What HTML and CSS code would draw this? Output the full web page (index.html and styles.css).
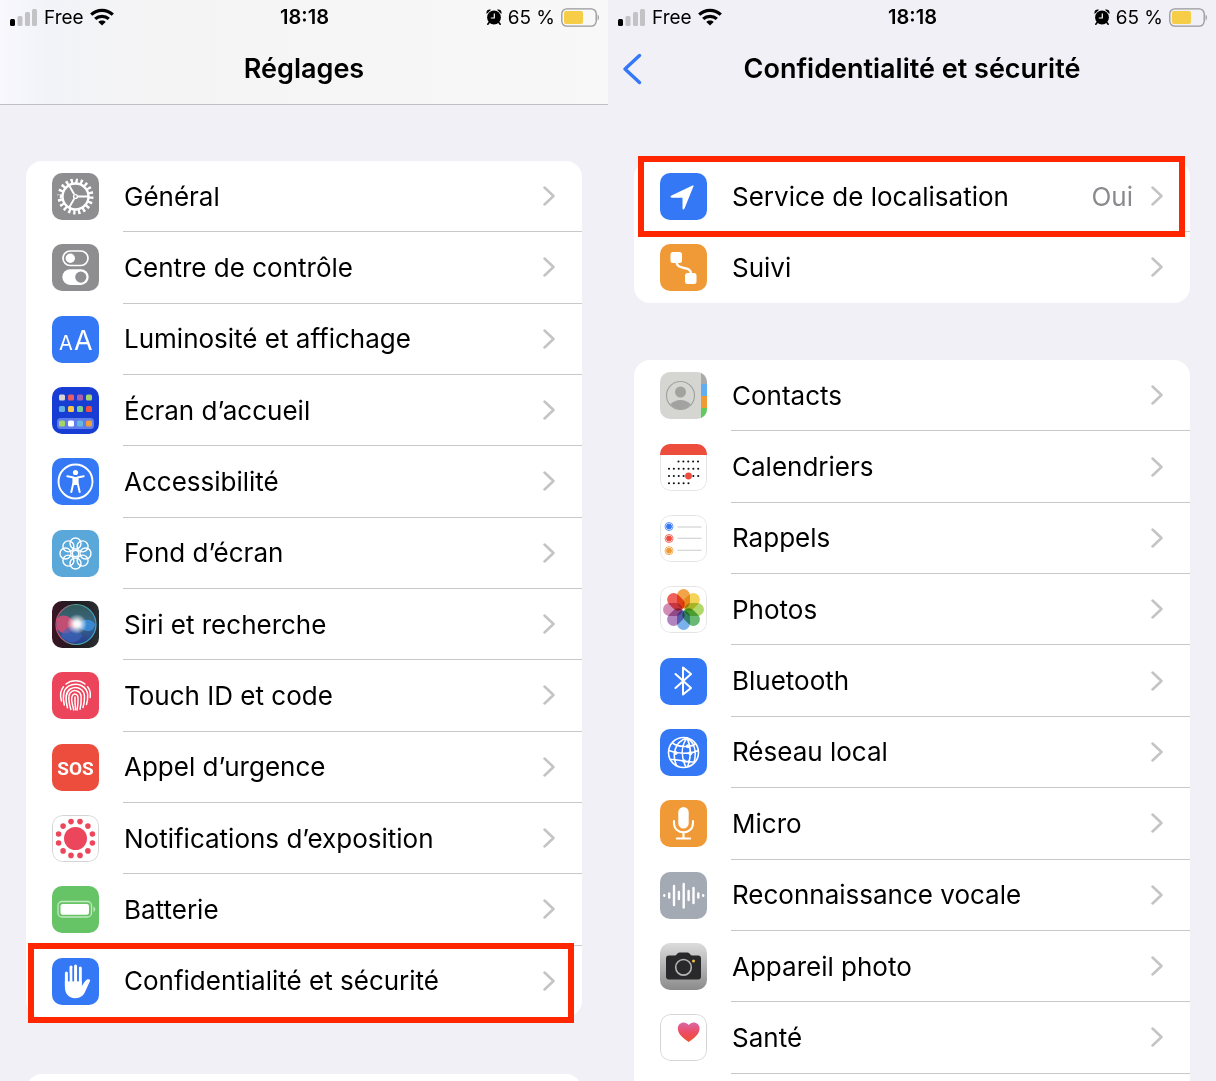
FILE: index.html
```html
<!DOCTYPE html>
<html lang="fr">
<head>
<meta charset="utf-8">
<meta name="viewport" content="width=device-width, initial-scale=1">
<title>Réglages – Confidentialité et sécurité</title>
<link rel="stylesheet" href="styles.css">
</head>
<body>
<svg class="symbols" aria-hidden="true">
  <symbol id="signal" viewBox="0 0 28 18">
    <rect x="0" y="11" width="5" height="7" rx="1.5" fill="#000"/>
    <g fill="#c3c3c5"><rect x="7.500" y="8" width="5" height="10" rx="1.500"/><rect x="15" y="4" width="5" height="14" rx="1.500"/><rect x="22" y="1" width="5" height="17" rx="1.500"/></g>
  </symbol>
  <symbol id="wifi" viewBox="0 0 24 18">
    <g fill="none" stroke="#000" stroke-width="3.200"><path d="M1.200 6.700C7.300.8 16.700.8 22.800 6.700"/><path d="M5.200 10.900C9 7.400 15 7.400 18.800 10.900"/></g>
    <path d="M12 17.600L8.300 13.900C10.300 12 13.700 12 15.700 13.900Z"/>
  </symbol>
  <symbol id="alarm" viewBox="0 0 16 16">
    <circle cx="8" cy="8.500" r="6.900"/>
    <path d="M.6 5C-.2 2 2 0 5 .8ZM15.400 5C16.200 2 14 0 11 .8Z"/>
    <path d="M3.500 13L1.800 15.200M12.500 13l1.700 2.200" stroke="#000" stroke-width="1.600" stroke-linecap="round"/>
    <path d="M8.300 4.500V9H4.800" fill="none" stroke="#fff" stroke-width="1.200"/>
  </symbol>
  <symbol id="battery" viewBox="0 0 38 19">
    <rect x=".8" y=".8" width="34.400" height="17.400" rx="5" fill="none" stroke="#98989b" stroke-width="1.300"/>
    <rect x="3" y="3" width="19" height="13" rx="2" fill="#f6cd46"/>
    <path d="M36.600 6.500c1.700.8 1.700 5.200 0 6z" fill="#98989b"/>
  </symbol>
  <symbol id="chevron" viewBox="0 0 12 20">
    <path d="M1.500 1.500L10.500 10L1.500 18.500" fill="none" stroke="#c4c4c6" stroke-width="2.500" stroke-linecap="round" stroke-linejoin="round"/>
  </symbol>
</svg>

<main class="screens">
  <section class="screen">
    <header class="header header-scrolled">
      <div class="status">
        <div class="status-side"><svg class="signal"><use href="#signal"/></svg><span>Free</span><svg class="wifi"><use href="#wifi"/></svg></div>
        <time class="clock">18:18</time>
        <div class="status-side status-end"><svg class="alarm"><use href="#alarm"/></svg><span>65 %</span><svg class="battery"><use href="#battery"/></svg></div>
      </div>
      <div class="titlebar"><h1 class="title">Réglages</h1></div>
    </header>

    <nav class="card card-settings">
      <a class="row" href="#">
        <svg class="icon gray" viewBox="0 0 47 47">
          <g fill="none" stroke="#fff"><circle cx="23.500" cy="23.500" r="15.700" stroke-width="4.600" pathLength="40" stroke-dasharray=".95 1.050"/><circle cx="23.500" cy="23.500" r="13" stroke-width="2.400"/><path d="M26 23.500H36M22.200 21.300L17 12.300M22.200 25.700L17 34.700" stroke-width="1.900"/><circle cx="23.500" cy="23.500" r="1.900" stroke-width="1.400"/></g>
        </svg>
        <span class="cell"><span class="label">Général</span><svg class="chevron"><use href="#chevron"/></svg></span>
      </a>
      <a class="row" href="#">
        <svg class="icon gray" viewBox="0 0 47 47">
          <rect x="11" y="7" width="25" height="14.500" rx="7.200" fill="none" stroke="#fff" stroke-width="1.700"/><circle cx="18.300" cy="14.200" r="4.700" fill="#fff"/>
          <rect x="10.300" y="25.300" width="26.400" height="15.600" rx="7.800" fill="#fff"/><circle cx="28.800" cy="33.100" r="5.600" fill="#8e8e93"/>
        </svg>
        <span class="cell"><span class="label">Centre de contrôle</span><svg class="chevron"><use href="#chevron"/></svg></span>
      </a>
      <a class="row" href="#">
        <svg class="icon blue" viewBox="0 0 47 47"><text class="glyph" x="7" y="34" font-size="20">A</text><text class="glyph" x="22" y="34" font-size="27">A</text></svg>
        <span class="cell"><span class="label">Luminosité et affichage</span><svg class="chevron"><use href="#chevron"/></svg></span>
      </a>
      <a class="row" href="#">
        <svg class="icon navy" viewBox="0 0 47 47">
          <rect x="5" y="31" width="37" height="11" rx="3.500" fill="#5f7eea"/>
          <g><rect x="7" y="7.500" width="6" height="6" rx="1.500" fill="#d9d5d3"/><rect x="16" y="7.500" width="6" height="6" rx="1.500" fill="#ee5b63"/><rect x="25" y="7.500" width="6" height="6" rx="1.500" fill="#a85fb0"/><rect x="34" y="7.500" width="6" height="6" rx="1.500" fill="#a6d468"/>
          <rect x="7" y="19" width="6" height="6" rx="1.500" fill="#5eafe2"/><rect x="16" y="19" width="6" height="6" rx="1.500" fill="#f8c64b"/><rect x="25" y="19" width="6" height="6" rx="1.500" fill="#78cd91"/><rect x="34" y="19" width="6" height="6" rx="1.500" fill="#ee4f3f"/>
          <rect x="7" y="33.500" width="6" height="6" rx="1.500" fill="#a6d468"/><rect x="16" y="33.500" width="6" height="6" rx="1.500" fill="#fff"/><rect x="25" y="33.500" width="6" height="6" rx="1.500" fill="#65b6e1"/><rect x="34" y="33.500" width="6" height="6" rx="1.500" fill="#f19d39"/></g>
        </svg>
        <span class="cell"><span class="label">Écran d’accueil</span><svg class="chevron"><use href="#chevron"/></svg></span>
      </a>
      <a class="row" href="#">
        <svg class="icon blue" viewBox="0 0 47 47">
          <circle cx="23.500" cy="23.500" r="17" fill="none" stroke="#fff" stroke-width="1.900"/><circle cx="23.500" cy="14.500" r="2.600" fill="#fff"/>
          <path d="M15.300 18.300L21.500 19.600V24.500L19.300 34M31.700 18.300L25.500 19.600V24.500L27.700 34" fill="none" stroke="#fff" stroke-width="2" stroke-linecap="round" stroke-linejoin="round"/><path d="M20.800 19H26.200V27H20.800Z" fill="#fff"/>
        </svg>
        <span class="cell"><span class="label">Accessibilité</span><svg class="chevron"><use href="#chevron"/></svg></span>
      </a>
      <a class="row" href="#">
        <svg class="icon sky" viewBox="0 0 47 47">
          <g fill="none" stroke="#fff" stroke-width="1.400"><circle cx="23.500" cy="13.500" r="5.500"/><circle cx="30.600" cy="16.400" r="5.500"/><circle cx="33.500" cy="23.500" r="5.500"/><circle cx="30.600" cy="30.600" r="5.500"/><circle cx="23.500" cy="33.500" r="5.500"/><circle cx="16.400" cy="30.600" r="5.500"/><circle cx="13.500" cy="23.500" r="5.500"/><circle cx="16.400" cy="16.400" r="5.500"/><circle cx="23.500" cy="23.500" r="3.200"/></g>
        </svg>
        <span class="cell"><span class="label">Fond d’écran</span><svg class="chevron"><use href="#chevron"/></svg></span>
      </a>
      <a class="row" href="#">
        <svg class="icon" viewBox="0 0 47 47">
          <defs>
            <linearGradient id="siri-bg"><stop offset="0" stop-color="#3b1524"/><stop offset=".5" stop-color="#1d1b20"/><stop offset="1" stop-color="#2b2e31"/></linearGradient>
            <linearGradient id="siri-orb" x2="0" y2="1"><stop offset="0" stop-color="#31595a"/><stop offset=".5" stop-color="#3b6680"/><stop offset="1" stop-color="#253e94"/></linearGradient>
            <linearGradient id="siri-rim"><stop offset="0" stop-color="#d34873"/><stop offset=".5" stop-color="#51a394"/><stop offset="1" stop-color="#3b9fd2"/></linearGradient>
            <radialGradient id="siri-glow"><stop offset="0" stop-color="#fff"/><stop offset=".3" stop-color="#fff" stop-opacity=".9"/><stop offset="1" stop-color="#fff" stop-opacity="0"/></radialGradient>
          </defs>
          <rect width="47" height="47" fill="url(#siri-bg)"/>
          <circle cx="24" cy="23.500" r="20" fill="url(#siri-orb)" stroke="url(#siri-rim)" stroke-width="1.200"/>
          <path d="M5 18C10 11 18 15 25 23C20 34 9 35 5 27Z" fill="#d84b72" opacity=".85"/>
          <path d="M24 24C33 15 42 19 43 24C40 34 31 30 24 24Z" fill="#3a8ee0" opacity=".85"/>
          <path d="M9 35C14 22 26 24 30 35C25 44 15 43 9 35Z" fill="#3f65bf" opacity=".65"/>
          <circle cx="25" cy="23" r="10" fill="url(#siri-glow)"/>
        </svg>
        <span class="cell"><span class="label">Siri et recherche</span><svg class="chevron"><use href="#chevron"/></svg></span>
      </a>
      <a class="row" href="#">
        <svg class="icon pink" viewBox="0 0 47 47">
          <g fill="none" stroke="#fff" stroke-width="1.500" stroke-linecap="round">
            <path d="M14 12C19.500 7.700 27.500 7.700 33 12"/>
            <path d="M9.500 29C8 24 8 19 11.500 14.800"/><path d="M35.500 14.800C39 18.500 38.500 22 38.200 25.500"/>
            <path d="M12.300 33C10.500 25 10.500 18 16.500 14.200C25 9.300 35.500 14 35.700 23.500C35.800 27.500 35.300 30 34.500 32.500"/>
            <path d="M15.500 35.800C13.300 28 12.800 20.500 18.300 17C25 13.200 32.300 17.500 32.500 24.500C32.500 29 32 32.500 31 35.500"/>
            <path d="M18.800 37.500C16.700 30 15.500 24.500 18 21C22 16.200 29 19 29.200 25C29.300 29.500 29 33.500 28 37.300"/>
            <path d="M21.700 38C20.500 32 18.800 28 20 24.500C21.500 20.500 26 21.700 26 26C26.200 30 26 34 25 38"/>
            <path d="M23 25V30C23.300 33 23.500 35.500 23.500 37.800"/>
          </g>
        </svg>
        <span class="cell"><span class="label">Touch ID et code</span><svg class="chevron"><use href="#chevron"/></svg></span>
      </a>
      <a class="row" href="#">
        <svg class="icon red" viewBox="0 0 47 47"><text class="glyph sos" x="23.500" y="30.500" text-anchor="middle">SOS</text></svg>
        <span class="cell"><span class="label">Appel d’urgence</span><svg class="chevron"><use href="#chevron"/></svg></span>
      </a>
      <a class="row" href="#">
        <svg class="icon" viewBox="0 0 47 47">
          <rect x=".5" y=".5" width="46" height="46" rx="10" fill="#fff" stroke="#d4d4d6"/>
          <g fill="#ec465c"><circle cx="23.500" cy="23.500" r="11.500"/><circle cx="40.400" cy="19" r="2.800"/><circle cx="35.900" cy="11.100" r="2.800"/><circle cx="28" cy="6.600" r="2.800"/><circle cx="19" cy="6.600" r="2.800"/><circle cx="11.100" cy="11.100" r="2.800"/><circle cx="6.600" cy="19" r="2.800"/><circle cx="6.600" cy="28" r="2.800"/><circle cx="11.100" cy="35.900" r="2.800"/><circle cx="19" cy="40.400" r="2.800"/><circle cx="28" cy="40.400" r="2.800"/><circle cx="35.900" cy="35.900" r="2.800"/><circle cx="40.400" cy="28" r="2.800"/></g>
        </svg>
        <span class="cell"><span class="label">Notifications d’exposition</span><svg class="chevron"><use href="#chevron"/></svg></span>
      </a>
      <a class="row" href="#">
        <svg class="icon green" viewBox="0 0 47 47">
          <rect x="6" y="15.500" width="33.500" height="15.500" rx="4" fill="none" stroke="#c3e9c1" stroke-width="1.300"/><rect x="8.500" y="18" width="28.500" height="10.800" rx="2.200" fill="#fff"/><path d="M41.500 20.500c2.300 1 2.300 4.500 0 5.500z" fill="#c3e9c1"/>
        </svg>
        <span class="cell"><span class="label">Batterie</span><svg class="chevron"><use href="#chevron"/></svg></span>
      </a>
      <a class="row row-marked mark-settings" href="#">
        <svg class="icon blue" viewBox="0 0 47 47">
          <g stroke="#fff" stroke-width="3" stroke-linecap="round" fill="none"><path d="M14.400 15V28M19 9V26M23.600 8V26M28.300 10V26"/></g>
          <path d="M12.900 23H29.800V28C31.500 25.800 33 22.500 35 21.500C37 20.700 38.700 21.500 38 23L33 34C31 38 28 40.200 23.500 40.200C16 40.200 12.900 35 12.900 29Z" fill="#fff"/>
          <path d="M16.700 15V23.500M21.300 10V23.500M26 10V23.500" stroke="#3478f6" stroke-width="1.300"/>
        </svg>
        <span class="cell"><span class="label">Confidentialité et sécurité</span><svg class="chevron"><use href="#chevron"/></svg></span>
      </a>
    </nav>
    <div class="card card-next"></div>
  </section>

  <section class="screen">
    <header class="header">
      <div class="status">
        <div class="status-side"><svg class="signal"><use href="#signal"/></svg><span>Free</span><svg class="wifi"><use href="#wifi"/></svg></div>
        <time class="clock">18:18</time>
        <div class="status-side status-end"><svg class="alarm"><use href="#alarm"/></svg><span>65 %</span><svg class="battery"><use href="#battery"/></svg></div>
      </div>
      <div class="titlebar">
        <button class="back" type="button" aria-label="Retour"><svg viewBox="0 0 20 32"><path d="M17.500 2.500L3 16L17.500 29.500" fill="none" stroke="#3478f6" stroke-width="3.400" stroke-linecap="round" stroke-linejoin="round"/></svg></button>
        <h2 class="title">Confidentialité et sécurité</h2>
      </div>
    </header>

    <nav class="card card-location">
      <a class="row row-marked mark-location" href="#">
        <svg class="icon blue" viewBox="0 0 47 47"><path d="M33.500 13.200L24.500 35.500C24 37 22.500 36.800 22.500 35.300V24.700H11.800C10.200 24.700 10 23.300 11.500 22.600L32 12.700C33.300 12.100 34 12.400 33.500 13.200Z" fill="#fff"/></svg>
        <span class="cell"><span class="label">Service de localisation</span><span class="value">Oui</span><svg class="chevron"><use href="#chevron"/></svg></span>
      </a>
      <a class="row" href="#">
        <svg class="icon orange" viewBox="0 0 47 47"><g fill="#fff"><rect x="10.500" y="8" width="11.500" height="11" rx="2.500"/><rect x="25" y="29" width="11.500" height="11" rx="2.500"/></g><path d="M16.500 18C17 27 30.500 20.500 31 30" fill="none" stroke="#fff" stroke-width="2.300"/></svg>
        <span class="cell"><span class="label">Suivi</span><svg class="chevron"><use href="#chevron"/></svg></span>
      </a>
    </nav>

    <nav class="card card-apps">
      <a class="row" href="#">
        <svg class="icon" viewBox="0 0 47 47">
          <rect width="47" height="47" fill="#d5d5d2"/><path d="M41 0H47V12H41Z" fill="#aaaaa8"/><path d="M41 12H47V24H41Z" fill="#5faff0"/><path d="M41 24H47V36H41Z" fill="#f09a36"/><path d="M41 36H47V47H41Z" fill="#62c860"/>
          <circle cx="20.500" cy="23.500" r="14" fill="none" stroke="#a2a2a0" stroke-width="1.200"/><circle cx="20.500" cy="20" r="5.500" fill="#a2a2a0"/><path d="M10.300 32.500C15 26.500 26 26.500 30.700 32.500C25.500 38.800 15.500 38.800 10.300 32.500Z" fill="#a2a2a0"/>
        </svg>
        <span class="cell"><span class="label">Contacts</span><svg class="chevron"><use href="#chevron"/></svg></span>
      </a>
      <a class="row" href="#">
        <svg class="icon" viewBox="0 0 47 47">
          <rect x=".5" y=".5" width="46" height="46" rx="10" fill="#fff" stroke="#e4e4e6"/><rect width="47" height="11" fill="#ec4d3d"/>
          <path d="M18.500 17.500H39M9 24.800H39M9 32H39M9 39.300H29" fill="none" stroke="#111" stroke-width="2.100" stroke-linecap="round" stroke-dasharray="0 4.870"/><circle cx="28.500" cy="32" r="3.400" fill="#ec4d3d"/>
        </svg>
        <span class="cell"><span class="label">Calendriers</span><svg class="chevron"><use href="#chevron"/></svg></span>
      </a>
      <a class="row" href="#">
        <svg class="icon" viewBox="0 0 47 47">
          <rect x=".5" y=".5" width="46" height="46" rx="10" fill="#fff" stroke="#e4e4e6"/>
          <path d="M17.500 12H41.500M17.500 23.300H41.500M17.500 35.300H41.500" stroke="#cacacc" stroke-width="1.100"/>
          <g fill="#3478f6" stroke="#3478f6"><circle cx="9" cy="11.500" r="2.500"/><circle cx="9" cy="11.500" r="4" fill="none" stroke-width=".8"/></g><g fill="#ec4d3d" stroke="#ec4d3d"><circle cx="9" cy="23.500" r="2.500"/><circle cx="9" cy="23.500" r="4" fill="none" stroke-width=".8"/></g><g fill="#f09a36" stroke="#f09a36"><circle cx="9" cy="35.700" r="2.500"/><circle cx="9" cy="35.700" r="4" fill="none" stroke-width=".8"/></g>
        </svg>
        <span class="cell"><span class="label">Rappels</span><svg class="chevron"><use href="#chevron"/></svg></span>
      </a>
      <a class="row" href="#">
        <svg class="icon" viewBox="0 0 47 47">
          <defs><rect id="petal" x="17" y="3" width="13" height="19.500" rx="6.500"/></defs>
          <rect x=".5" y=".5" width="46" height="46" rx="10" fill="#fff" stroke="#e4e4e6"/>
          <g class="petals"><use href="#petal" fill="#f09a36"/><use href="#petal" fill="#f4cf45" transform="rotate(45 23.500 23.500)"/><use href="#petal" fill="#a9d45b" transform="rotate(90 23.500 23.500)"/><use href="#petal" fill="#58b265" transform="rotate(135 23.500 23.500)"/><use href="#petal" fill="#6aa9e8" transform="rotate(180 23.500 23.500)"/><use href="#petal" fill="#a977b8" transform="rotate(225 23.500 23.500)"/><use href="#petal" fill="#cd80b0" transform="rotate(270 23.500 23.500)"/><use href="#petal" fill="#ee5149" transform="rotate(315 23.500 23.500)"/></g>
        </svg>
        <span class="cell"><span class="label">Photos</span><svg class="chevron"><use href="#chevron"/></svg></span>
      </a>
      <a class="row" href="#">
        <svg class="icon blue" viewBox="0 0 47 47"><path d="M15.500 16L31 30L23 36.500V9.500L31 16L15.500 30" fill="none" stroke="#fff" stroke-width="2" stroke-linecap="round" stroke-linejoin="round"/></svg>
        <span class="cell"><span class="label">Bluetooth</span><svg class="chevron"><use href="#chevron"/></svg></span>
      </a>
      <a class="row" href="#">
        <svg class="icon blue" viewBox="0 0 47 47">
          <g fill="none" stroke="#fff" stroke-width="1.600"><circle cx="23.500" cy="23.500" r="15"/><path d="M27 8.800C15 13 11.500 25 16.500 36.500M27 8.800C21 17 21 28 26 38.200M27 8.800C31 17 31.500 27 27.500 38M27 8.800C34 13 37 22 34 34M12.500 14C18.500 18.500 30 18.500 35.500 15M8.700 21.500C17 25 30 25.500 38.300 21.500M10.500 30.500C17 30 24 33 34.500 33"/></g>
          <g fill="#fff"><circle cx="15.500" cy="24" r="2"/><circle cx="28" cy="17.300" r="2"/><circle cx="30.300" cy="24.200" r="2"/><circle cx="24" cy="32" r="1.800"/></g>
        </svg>
        <span class="cell"><span class="label">Réseau local</span><svg class="chevron"><use href="#chevron"/></svg></span>
      </a>
      <a class="row" href="#">
        <svg class="icon orange" viewBox="0 0 47 47"><rect x="18.300" y="7" width="10.400" height="21.500" rx="5.200" fill="#fff"/><path d="M14 21V23C14 35.500 33 35.500 33 23V21M23.500 32.500V38.500M16.800 38.500H30.200" fill="none" stroke="#fff" stroke-width="2.100" stroke-linecap="round"/></svg>
        <span class="cell"><span class="label">Micro</span><svg class="chevron"><use href="#chevron"/></svg></span>
      </a>
      <a class="row" href="#">
        <svg class="icon steel" viewBox="0 0 47 47"><path d="M4.300 23.300V23.700M9.200 21.500V25.500M14 14V33M18.900 20V27M23.700 12V35.500M28.600 19V28M33.500 16V31M38.300 21.500V25.500M43.200 23.300V23.700" stroke="#fff" stroke-width="2.400" stroke-linecap="round"/></svg>
        <span class="cell"><span class="label">Reconnaissance vocale</span><svg class="chevron"><use href="#chevron"/></svg></span>
      </a>
      <a class="row" href="#">
        <svg class="icon silver" viewBox="0 0 47 47"><path d="M9 12.500H15C17 12.500 17 9.500 19.500 9.500H27.500C30 9.500 30 12.500 32 12.500H38C40 12.500 41 13.500 41 15.500V33.500C41 35.500 40 36.500 38 36.500H9C7 36.500 6 35.500 6 33.500V15.500C6 13.500 7 12.500 9 12.500Z" fill="#29292b"/><circle cx="23.500" cy="24.300" r="7.800" fill="#29292b" stroke="#b5b5b6" stroke-width="1.600"/><circle cx="33.500" cy="18" r="1.500" fill="#f3bd42"/></svg>
        <span class="cell"><span class="label">Appareil photo</span><svg class="chevron"><use href="#chevron"/></svg></span>
      </a>
      <a class="row" href="#">
        <svg class="icon" viewBox="0 0 47 47">
          <defs><linearGradient id="heart" x2="0" y2="1"><stop offset="0" stop-color="#d967a8"/><stop offset=".5" stop-color="#ec4d65"/><stop offset="1" stop-color="#ee5032"/></linearGradient></defs>
          <rect x=".5" y=".5" width="46" height="46" rx="10" fill="#fff" stroke="#d4d4d6"/><path d="M28.700 28C23 24 17.800 20 17.800 14.500C17.800 8 25.500 6.500 28.700 11C31.900 6.500 39.600 8 39.600 14.500C39.600 20 34.400 24 28.700 28Z" fill="url(#heart)"/>
        </svg>
        <span class="cell"><span class="label">Santé</span><svg class="chevron"><use href="#chevron"/></svg></span>
      </a>
      <div class="row"></div>
    </nav>
  </section>
</main>
</body>
</html>
```
FILE: styles.css
```css
* { box-sizing: border-box; }

body {
  margin: 0;
  background: #f1f0f6;
  color: #000;
  font-family: Inter, "Liberation Sans", sans-serif;
  font-size: 26px;
}

svg { display: block; flex: none; }
.symbols { position: absolute; width: 0; height: 0; }

.screens {
  display: grid;
  grid-template-columns: 1fr 1fr;
  height: 100vh;
  overflow: hidden;
}

.screen { min-width: 0; }

/* Header */
.header {
  display: flex;
  flex-direction: column;
  border-bottom: 1px solid transparent;
}
.header-scrolled {
  border-bottom-color: #bfbfc2;
  background: linear-gradient(90deg, #f8f8fd 0%, #f2f3f8 8%, #f4f4f5 25%, #f8f8f8 100%);
}

.status {
  display: grid;
  grid-template-columns: 1fr auto 1fr;
  align-items: center;
  height: 34px;
  padding: 0 9px 0 10px;
  font-size: 19px;
}
.status-side { display: flex; align-items: center; gap: 6px; }
.status-end { justify-content: flex-end; }
.clock { font-size: 20px; font-weight: 600; }
.signal { width: 28px; height: 18px; }
.wifi { width: 24px; height: 18px; }
.alarm { width: 16px; height: 16px; }
.battery { width: 38px; height: 19px; }

.titlebar {
  display: grid;
  grid-template-columns: 1fr auto 1fr;
  align-items: center;
  height: 70px;
  padding: 0 14px;
}
.title {
  grid-column: 2;
  margin: 0;
  font-size: 27px;
  font-weight: 600;
  line-height: 32px;
}
.back {
  grid-column: 1;
  justify-self: start;
  padding: 0;
  border: 0;
  background: none;
}
.back svg { width: 20px; height: 32px; }

/* Grouped lists */
.card {
  display: grid;
  grid-auto-rows: 1fr;
  margin: 56px 26px 0;
  border-radius: 16px;
  background: #fff;
}
.card-settings { min-height: 856px; }
.card-location { min-height: 142px; }
.card-apps { min-height: 785px; }
.card-next { min-height: 71px; }
.card + .card { margin-top: 57px; }

.row {
  display: flex;
  align-items: center;
  padding-left: 26px;
  color: inherit;
  text-decoration: none;
}

.cell {
  display: flex;
  flex: 1;
  align-items: center;
  align-self: stretch;
  min-width: 0;
  margin-left: 24px;
  padding: 0 27px 0 1px;
  border-bottom: 1px solid #c8c8ca;
}
.row:last-child .cell { border-bottom-color: transparent; }
.label { flex: 1; white-space: nowrap; }
.value { margin-right: 18px; color: #8a8a8e; }
.chevron { width: 12px; height: 20px; }

/* Outline drawn over the rows to follow */
.row-marked { position: relative; }
.row-marked::after {
  content: "";
  position: absolute;
  border: 6px solid #ff2600;
  pointer-events: none;
}
.mark-settings::after { inset: -3px 8px -6px 2px; }
.mark-location::after { inset: -5px 5px -5px 4px; }

/* App icons */
.icon { width: 47px; height: 47px; border-radius: 10px; overflow: hidden; }
.gray { background: #8e8e91; }
.blue { background: #3478f6; }
.navy { background: #173dd4; }
.sky { background: #5aa8da; }
.pink { background: #eb445b; }
.red { background: #ec4d3d; }
.green { background: #67c466; }
.orange { background: #f09a37; }
.steel { background: #a3aab4; }
.silver { background: linear-gradient(#dcdcdc, #8b8b8b); }
.glyph { fill: #fff; font-weight: 400; }
.sos { font-family: "Liberation Sans Narrow", Roboto, sans-serif; font-size: 19px; font-weight: 700; }
.petals use { mix-blend-mode: multiply; opacity: .9; }
```
